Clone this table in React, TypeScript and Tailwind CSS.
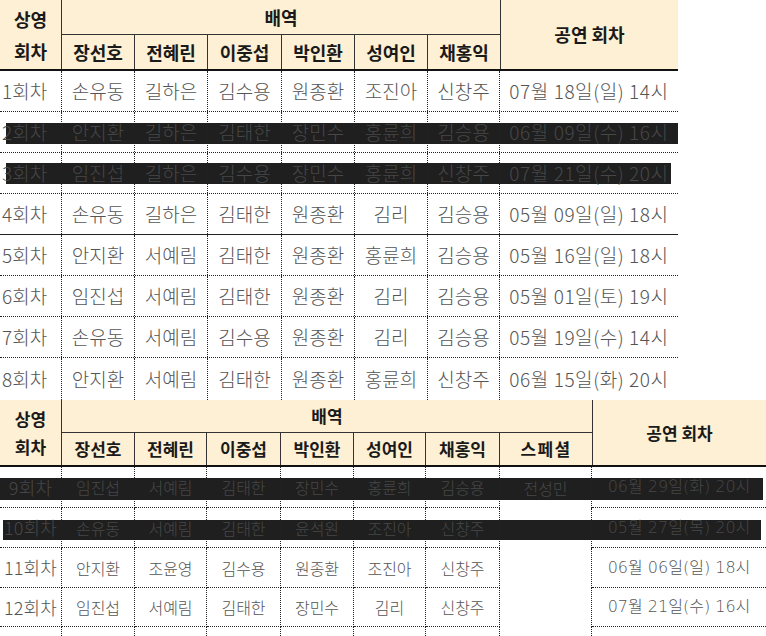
import React from 'react';

const TOP_COLS = 'grid-cols-[62px_73px_73px_74px_73px_73px_72px_178px]';
const BOT_COLS = 'grid-cols-[62px_73px_72px_74px_73px_72px_74px_92px_174px]';

const CAST = ['장선호', '전혜린', '이중섭', '박인환', '성여인', '채홍익'];

type Row = {
  cells: string[];
  h: string;
  bar?: string;
  solid?: boolean;
};

const topRows: Row[] = [
  { cells: ['1회차', '손유동', '길하은', '김수용', '원종환', '조진아', '신창주', '07월 18일(일) 14시'], h: 'h-[41px]' },
  { cells: ['2회차', '안지환', '길하은', '김태한', '장민수', '홍륜희', '김승용', '06월 09일(수) 16시'], h: 'h-[41px]', bar: 'left-[6px] right-0 top-[11px] h-[21px]' },
  { cells: ['3회차', '임진섭', '길하은', '김수용', '장민수', '홍륜희', '신창주', '07월 21일(수) 20시'], h: 'h-[41px]', bar: 'left-[6px] w-[665px] top-[10px] h-[21px]' },
  { cells: ['4회차', '손유동', '길하은', '김태한', '원종환', '김리', '김승용', '05월 09일(일) 18시'], h: 'h-[41px]', solid: true },
  { cells: ['5회차', '안지환', '서예림', '김태한', '원종환', '홍륜희', '김승용', '05월 16일(일) 18시'], h: 'h-[41px]' },
  { cells: ['6회차', '임진섭', '서예림', '김태한', '원종환', '김리', '김승용', '05월 01일(토) 19시'], h: 'h-[41px]' },
  { cells: ['7회차', '손유동', '서예림', '김수용', '원종환', '김리', '김승용', '05월 19일(수) 14시'], h: 'h-[41px]' },
];

const botRows: Row[] = [
  { cells: ['9회차', '임진섭', '서예림', '김태한', '장민수', '홍륜희', '김승용', '전성민', '06월 29일(화) 20시'], h: 'h-[41px]', bar: 'left-0 w-[763px] top-[11px] h-[22px]' },
  { cells: ['10회차', '손유동', '서예림', '김태한', '윤석원', '조진아', '신창주', '', '05월 27일(목) 20시'], h: 'h-[40px]', bar: 'left-[3px] w-[758px] top-[12px] h-[20px]' },
  { cells: ['11회차', '안지환', '조윤영', '김수용', '원종환', '조진아', '신창주', '', '06월 06일(일) 18시'], h: 'h-[40px]' },
  { cells: ['12회차', '임진섭', '서예림', '김태한', '장민수', '김리', '신창주', '', '07월 21일(수) 16시'], h: 'h-[39px]' },
];

// 숫자가 넓은 글꼴 (하단 표 날짜)
const WIDE_DIGITS = { fontFamily: '"DejaVu Sans", "Noto Sans CJK KR", sans-serif' };

function TopBody({ row, last }: { row: Row; last?: boolean }) {
  const text = row.bar ? 'text-[#474747]' : 'text-[#555]';
  const bottom = last ? '' : row.solid ? 'border-b border-solid border-b-[#222]' : 'border-b border-dotted border-b-[#222]';
  return (
    <div className={`relative grid ${TOP_COLS} ${row.h} ${bottom}`}>
      {row.bar && <div className={`absolute bg-[#1f1f1f] ${row.bar}`} />}
      {row.cells.map((c, i) => (
        <div
          key={i}
          className={`relative z-10 flex items-center ${i === 0 ? 'justify-start pl-[2px]' : 'justify-center'} ${
            i < row.cells.length - 1 ? 'border-r border-dotted border-r-[#222]' : 'tracking-[0.03em]'
          } ${text} whitespace-nowrap`}
        >
          {c}
        </div>
      ))}
    </div>
  );
}

function BotBody({ row }: { row: Row }) {
  const text = row.bar ? 'text-[#474747]' : 'text-[#555]';
  return (
    <div className={`relative grid ${BOT_COLS} ${row.h}`}>
      {row.bar && <div className={`absolute bg-[#1f1f1f] ${row.bar}`} />}
      {row.cells.map((c, i) => (
        <div
          key={i}
          style={i === 8 ? WIDE_DIGITS : undefined}
          className={`relative z-10 flex items-center justify-center whitespace-nowrap ${text} ${
            i < row.cells.length - 1 ? 'border-r border-dotted border-r-[#222]' : ''
          } ${i === 7 ? '' : 'border-b border-dotted border-b-[#222]'} ${i === 8 ? 'text-[16px] font-extralight' : ''} ${
            i === 0 ? 'text-[18px] tracking-[0.01em]' : ''
          }`}
        >
          {c}
        </div>
      ))}
    </div>
  );
}

export default function App() {
  return (
    <div
      className="w-[766px] h-[636px] overflow-hidden bg-white font-light"
      style={{ fontFamily: '"Noto Sans CJK KR", "Noto Sans", sans-serif' }}
    >
      {/* 상단 표 */}
      <div className="w-[678px]">
        <div className={`grid ${TOP_COLS} grid-rows-[35px_34px] bg-[#fdf0d4] border-b-2 border-b-[#111] font-bold text-[18px] text-[#1a1a1a]`}>
          <div className="row-span-2 flex items-center justify-center text-center leading-[32px] border-r border-r-[#333]">
            상영
            <br />
            회차
          </div>
          <div className="col-span-6 flex items-center justify-center border-b border-b-[#333]">배역</div>
          <div className="row-span-2 flex items-center justify-center border-l border-l-[#333]">공연 회차</div>
          {CAST.map((n, i) => (
            <div key={n} className={`flex items-center justify-center ${i < 5 ? 'border-r border-r-[#333]' : ''}`}>
              {n}
            </div>
          ))}
        </div>
        <div className="text-[19px]">
          {topRows.map((r, i) => (
            <TopBody key={i} row={r} />
          ))}
          <TopBody
            last
            row={{ cells: ['8회차', '안지환', '서예림', '김태한', '원종환', '홍륜희', '신창주', '06월 15일(화) 20시'], h: 'h-[42px]' }}
          />
        </div>
      </div>

      {/* 하단 표 */}
      <div className="w-[766px]">
        <div className={`grid ${BOT_COLS} grid-rows-[33px_32px] bg-[#fdf0d4] border-b-2 border-b-[#111] font-bold text-[17px] text-[#1a1a1a]`}>
          <div className="row-span-2 flex items-center justify-center text-center leading-[28px] border-r border-r-[#333]">
            상영
            <br />
            회차
          </div>
          <div className="col-span-7 flex items-center justify-center border-b border-b-[#333]">배역</div>
          <div className="row-span-2 flex items-center justify-center border-l border-l-[#333]">공연 회차</div>
          {[...CAST, '스페셜'].map((n, i) => (
            <div
              key={n}
              className={`flex items-center justify-center ${i < 6 ? 'border-r border-r-[#333]' : ''} ${
                n === '스페셜' ? 'tracking-[0.08em]' : ''
              }`}
            >
              {n}
            </div>
          ))}
        </div>
        <div className="text-[16px]">
          {botRows.map((r, i) => (
            <BotBody key={i} row={r} />
          ))}
          <div className={`grid ${BOT_COLS} h-[9px]`}>
            {Array.from({ length: 9 }).map((_, i) => (
              <div key={i} className={i < 8 ? 'border-r border-dotted border-r-[#222]' : ''} />
            ))}
          </div>
        </div>
      </div>
    </div>
  );
}
